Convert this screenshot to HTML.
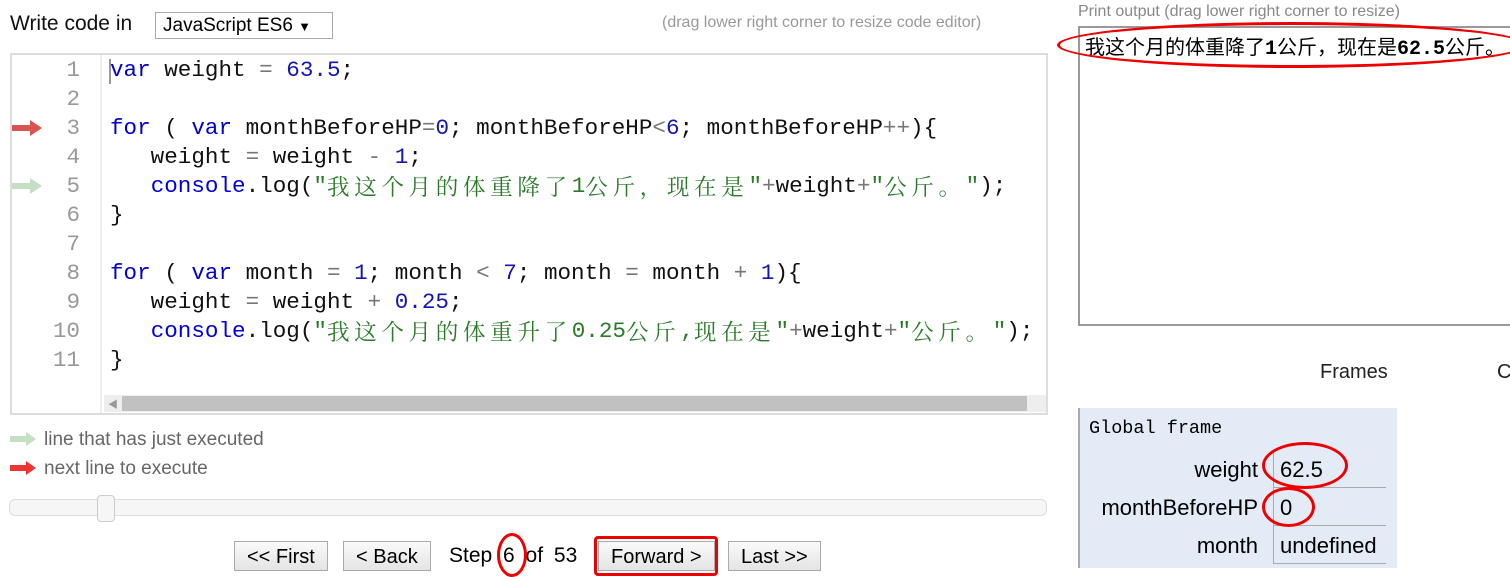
<!DOCTYPE html>
<html><head><meta charset="utf-8"><style>
body{margin:0;width:1510px;height:567px;overflow:hidden;background:#fff;font-family:"Liberation Sans","Noto Sans CJK SC",sans-serif;position:relative}
.a{position:absolute;white-space:nowrap}
.code{font-family:"Liberation Mono","Noto Sans CJK SC",monospace;font-size:22.6px;line-height:29px}
.code>div{height:29px}
.kw{color:#0000cc}.num{color:#1515b0}.str{color:#2a7a2a}.op{color:#777}.fn{color:#0000dd}
.cj{letter-spacing:4.6px;font-family:"Noto Serif CJK SC","Noto Sans CJK SC",serif;line-height:1;display:inline-block;vertical-align:-3px}
.ln{color:#999;text-align:right;width:40px}
.ell{position:absolute;border:3px solid #e00;border-radius:50%;box-sizing:border-box}
.btn{position:absolute;top:541px;height:30px;border:1px solid #aaa;background:linear-gradient(#fafafa,#e4e4e4);font-size:20px;line-height:30px;padding:0 12px;box-sizing:border-box}
</style></head><body>
<div class="a" style="left:10px;top:12px;font-size:21px;color:#111">Write code in</div>
<div class="a" style="left:155px;top:12px;width:178px;height:27px;border:1px solid #aaa;box-sizing:border-box;font-size:19px;line-height:25px;padding-left:7px">JavaScript ES6 <span style="font-size:13px">▼</span></div>
<div class="a" style="left:662px;top:14px;font-size:16px;color:#999">(drag lower right corner to resize code editor)</div>

<div class="a" style="left:10px;top:53px;width:1038px;height:362px;border:2px solid #ddd;box-sizing:border-box"></div>
<div class="a" style="left:100px;top:55px;width:2px;height:358px;background:#eee"></div>
<div class="a" style="left:109px;top:59px;width:2px;height:25px;background:#999"></div>
<div class="a" style="left:104px;top:395px;width:942px;height:17px;background:#eee"></div>
<div class="a" style="left:122px;top:396px;width:905px;height:15px;background:#c1c1c1"></div>
<div class="a" style="left:108px;top:396px;font-size:10px;color:#999">◀</div>

<svg class="a" style="left:12px;top:120px" width="32" height="16"><path d="M0 5h18V0l12 8-12 8v-5H0z" fill="#d9534f"/></svg>
<svg class="a" style="left:12px;top:178px" width="32" height="16"><path d="M0 5h18V0l12 8-12 8v-5H0z" fill="#c5dfc5"/></svg>

<div class="a code" style="left:40px;top:56px">
<div class="ln">1</div><div class="ln">2</div><div class="ln">3</div><div class="ln">4</div><div class="ln">5</div><div class="ln">6</div><div class="ln">7</div><div class="ln">8</div><div class="ln">9</div><div class="ln">10</div><div class="ln">11</div></div>
<div class="a code" style="left:110px;top:56px;color:#111">
<div><span class="kw">var</span> weight <span class="op">=</span> <span class="num">63.5</span>;</div>
<div>&nbsp;</div>
<div><span class="kw">for</span> ( <span class="kw">var</span> monthBeforeHP<span class="op">=</span><span class="num">0</span>; monthBeforeHP<span class="op">&lt;</span><span class="num">6</span>; monthBeforeHP<span class="op">++</span>){</div>
<div>&nbsp;&nbsp; weight <span class="op">=</span> weight <span class="op">-</span> <span class="num">1</span>;</div>
<div>&nbsp;&nbsp; <span class="fn">console</span>.log(<span class="str">"<span class="cj">我这个月的体重降了</span>1<span class="cj">公斤，现在是</span>"</span><span class="op">+</span>weight<span class="op">+</span><span class="str">"<span class="cj">公斤。</span>"</span>);</div>
<div>}</div>
<div>&nbsp;</div>
<div><span class="kw">for</span> ( <span class="kw">var</span> month <span class="op">=</span> <span class="num">1</span>; month <span class="op">&lt;</span> <span class="num">7</span>; month <span class="op">=</span> month <span class="op">+</span> <span class="num">1</span>){</div>
<div>&nbsp;&nbsp; weight <span class="op">=</span> weight <span class="op">+</span> <span class="num">0.25</span>;</div>
<div>&nbsp;&nbsp; <span class="fn">console</span>.log(<span class="str">"<span class="cj">我这个月的体重升了</span>0.25<span class="cj">公斤</span>,<span class="cj">现在是</span>"</span><span class="op">+</span>weight<span class="op">+</span><span class="str">"<span class="cj">公斤。</span>"</span>);</div>
<div>}</div>
</div>

<svg class="a" style="left:10px;top:432px" width="28" height="14"><path d="M0 4h16V0l10 7-10 7v-4H0z" fill="#c5dfc5"/></svg>
<div class="a" style="left:44px;top:429px;font-size:19px;color:#666">line that has just executed</div>
<svg class="a" style="left:10px;top:461px" width="28" height="14"><path d="M0 4h16V0l10 7-10 7v-4H0z" fill="#e33"/></svg>
<div class="a" style="left:44px;top:458px;font-size:19px;color:#666">next line to execute</div>

<div class="a" style="left:9px;top:499px;width:1038px;height:17px;border:1px solid #ddd;border-radius:6px;background:#f6f6f6;box-sizing:border-box"></div>
<div class="a" style="left:97px;top:495px;width:18px;height:27px;border:1px solid #ccc;border-radius:4px;background:#f6f6f6;box-sizing:border-box"></div>

<div class="btn" style="left:234px">&lt;&lt; First</div>
<div class="btn" style="left:343px">&lt; Back</div>
<div class="a" style="left:449px;top:544px;font-size:21px;word-spacing:5px">Step 6 of 53</div>
<div class="btn" style="left:598px">Forward &gt;</div>
<div class="btn" style="left:728px">Last &gt;&gt;</div>
<div class="a" style="left:594px;top:536px;width:124px;height:40px;border:3px solid #e00;border-radius:4px;box-sizing:border-box"></div>
<div class="ell" style="left:497px;top:533px;width:30px;height:44px"></div>

<div class="a" style="left:1078px;top:3px;font-size:16px;color:#888">Print output (drag lower right corner to resize)</div>
<div class="a" style="left:1078px;top:26px;width:440px;height:300px;border:2px solid #999;box-sizing:border-box"></div>
<div class="a" style="left:1085px;top:31px;font-size:20px;font-family:'Liberation Mono','Noto Sans CJK SC',monospace">我这个月的体重降了<b>1</b>公斤，现在是<b>62.5</b>公斤。</div>
<div class="ell" style="left:1057px;top:22px;width:470px;height:46px"></div>

<div class="a" style="left:1320px;top:361px;font-size:20px;color:#222">Frames</div>
<div class="a" style="left:1497px;top:361px;font-size:20px;color:#222">C</div>

<div class="a" style="left:1078px;top:408px;width:319px;height:160px;background:#e2ebf6;border-left:2px solid #aaa;box-sizing:border-box"></div>
<div class="a" style="left:1089px;top:418px;font-size:18.5px;font-family:'Liberation Mono',monospace">Global frame</div>
<div class="a" style="left:1080px;top:457px;width:178px;text-align:right;font-size:22px">weight</div>
<div class="a" style="left:1080px;top:495px;width:178px;text-align:right;font-size:22px">monthBeforeHP</div>
<div class="a" style="left:1080px;top:533px;width:178px;text-align:right;font-size:22px">month</div>
<div class="a" style="left:1273px;top:450px;width:112px;height:37px;border-left:1px solid #aaa;border-bottom:1px solid #aaa"></div>
<div class="a" style="left:1273px;top:488px;width:112px;height:37px;border-left:1px solid #aaa;border-bottom:1px solid #aaa"></div>
<div class="a" style="left:1273px;top:526px;width:112px;height:37px;border-left:1px solid #aaa;border-bottom:1px solid #aaa"></div>
<div class="a" style="left:1280px;top:457px;font-size:22px">62.5</div>
<div class="a" style="left:1280px;top:495px;font-size:22px">0</div>
<div class="a" style="left:1280px;top:533px;font-size:22px">undefined</div>
<div class="ell" style="left:1262px;top:442px;width:86px;height:47px"></div>
<div class="ell" style="left:1262px;top:487px;width:53px;height:40px"></div>
</body></html>
